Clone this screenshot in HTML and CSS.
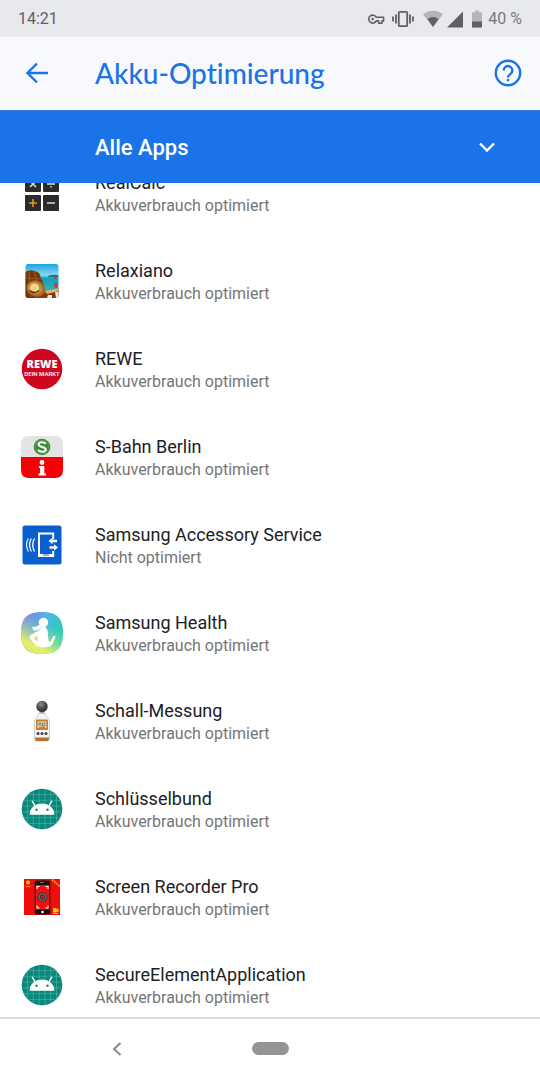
FILE: index.html
```
<!DOCTYPE html>
<html lang="de">
<head>
  <meta charset="utf-8">
  <meta name="viewport" content="width=device-width, initial-scale=1">
  <title>Akku-Optimierung</title>
  <link rel="stylesheet" href="styles.css">
</head>
<body>
  <div class="screen">
    <div class="status-bar">
      <span class="clock">14:21</span>
      <div class="status-icons">
        <svg class="icon-key" width="18" height="18" viewBox="0 0 18 18" fill="none" stroke="#5f6062" stroke-width="1.6" stroke-linejoin="round">
          <path d="M9.3 7.3A4 4 0 1 0 9.3 10.9H11.6V13.2H15V10.9H16.6V7.3Z"/>
          <circle cx="5.6" cy="9.1" r="1.3" fill="#5f6062" stroke="none"/>
        </svg>
        <svg class="icon-vibrate" width="22" height="18" viewBox="0 0 22 18" fill="none" stroke="#5f6062" stroke-width="1.8">
          <rect x="6.8" y="1.8" width="8.4" height="14.4" rx="1"/>
          <path d="M4 4.5v9M1 6.500v5M18 4.500v9M21 6.500v5"/>
        </svg>
        <svg class="icon-wifi" width="20" height="18" viewBox="0 0 20 18">
          <path d="M0 4.200C6-.4 14-.4 20 4.200L10 17Z" fill="#b4b5b8"/>
          <path d="M4.500 9.200C7.800 6.400 12.200 6.400 15.500 9.200L10 17Z" fill="#5f6062"/>
        </svg>
        <svg class="icon-signal" width="16" height="18" viewBox="0 0 16 18">
          <path d="M16 1.500V17.500H0Z" fill="#5f6062"/>
        </svg>
        <svg class="icon-battery" width="10" height="18" viewBox="0 0 10 18">
          <path d="M3 .5h4v1.700h2.300q.7 0 .7.700V16.800q0 .7-.7.700H.7q-.7 0-.7-.7V2.900q0-.7.7-.7H3Z" fill="#b4b5b8"/>
          <path d="M0 11.500h10v5.300q0 .7-.7.700H.7q-.7 0-.7-.7Z" fill="#5f6062"/>
        </svg>
        <span class="battery-level">40 %</span>
      </div>
    </div>

    <header class="app-bar">
      <button type="button" class="icon-button" aria-label="Zurück">
        <svg width="26" height="26" viewBox="0 0 26 26" fill="none" stroke="#1a73e8" stroke-width="2.400">
          <path d="M24 13H3.500M13 3.500L3.500 13L13 22.500"/>
        </svg>
      </button>
      <h1>Akku-Optimierung</h1>
      <button type="button" class="icon-button" aria-label="Hilfe">
        <svg width="28" height="28" viewBox="0 0 28 28" fill="none" stroke="#1a73e8" stroke-width="2.400">
          <circle cx="14" cy="14" r="12.200"/>
          <path d="M9.700 11.500a4.300 4.300 0 1 1 7.500 2.700c-1.500 1.600-3.200 2.100-3.200 4.300"/>
          <path d="M14 19.800v2.500"/>
        </svg>
      </button>
    </header>

    <div class="filter-bar">
      <select class="filter" aria-label="Apps filtern">
        <option>Alle Apps</option>
        <option>Nicht optimiert</option>
      </select>
      <svg class="filter-arrow" width="18" height="18" viewBox="0 0 18 18" fill="none" stroke="#fff" stroke-width="2.400">
        <path d="M2 5.500L9 12.500L16 5.500"/>
      </svg>
    </div>

    <main class="list">
      <ul class="apps">
        <li class="app">
          <svg class="app-icon" viewBox="0 0 42 42">
            <g fill="#2b2b2b">
              <rect x="4" y="4" width="16" height="16" rx="1"/>
              <rect x="22" y="4" width="16" height="16" rx="1"/>
              <rect x="4" y="23" width="16" height="16" rx="1"/>
              <rect x="22" y="23" width="16" height="16" rx="1"/>
            </g>
            <path d="M9 9l6 6M15 9l-6 6M26 12h8M30 8.500v1.500M30 14v1.500M26 31h8" stroke="#ddd" stroke-width="1.500"/>
            <path d="M8 31h8M12 27v8" stroke="#f09a1c" stroke-width="1.500"/>
          </svg>
          <div class="app-text">
            <span class="app-name">RealCalc</span>
            <span class="app-state">Akkuverbrauch optimiert</span>
          </div>
        </li>
        <li class="app">
          <svg class="app-icon" viewBox="0 0 42 42">
            <defs>
              <linearGradient id="sky" x2="0" y2="1">
                <stop offset="0" stop-color="#1aa5e0"/>
                <stop offset=".33" stop-color="#8ed8ea"/>
                <stop offset=".42" stop-color="#0f9fc4"/>
                <stop offset="1" stop-color="#39bcc9"/>
              </linearGradient>
              <clipPath id="beach"><rect x="4.500" y="4" width="33" height="34" rx="2.500"/></clipPath>
            </defs>
            <g clip-path="url(#beach)">
              <rect x="4" y="4" width="34" height="34" fill="url(#sky)"/>
              <path d="M27 16q5-2 11-.5v1.500H27Z" fill="#1b7584"/>
              <path d="M4 12q7-4 14 1l5 12v13H4Z" fill="#74380f"/>
              <path d="M8 12l2 25M13 11l5 18M4 18l16 1" stroke="#a35a20" stroke-width="1"/>
              <path d="M17 33l21-5v10H12Z" fill="#803a12"/>
              <path d="M24 31l14-3v3l-12 3Z" fill="#e3b36c"/>
              <path d="M27 35h4v3h-5ZM34 32h4v6h-3Z" fill="#f1ead8"/>
              <ellipse cx="15" cy="28.500" rx="9.500" ry="8" fill="#aa6a27" transform="rotate(20 15 28.500)"/>
              <ellipse cx="14" cy="28" rx="7.500" ry="6" fill="#c48a40" transform="rotate(20 14 28)"/>
              <ellipse cx="13.500" cy="28" rx="4.700" ry="4.500" fill="#f0d68b"/>
              <path d="M9 30.500q4 4 9 0" fill="none" stroke="#54270d" stroke-width="1.200"/>
              <path d="M24 24l4 4M30 22l-3 5" stroke="#51ad68" stroke-width="1"/>
              <rect x="33" y="16" width="2.500" height="3" fill="#6d5b65"/>
              <path d="M33 23h4l-1 5h-2Z" fill="#e3332c"/>
            </g>
          </svg>
          <div class="app-text">
            <span class="app-name">Relaxiano</span>
            <span class="app-state">Akkuverbrauch optimiert</span>
          </div>
        </li>
        <li class="app">
          <svg class="app-icon" viewBox="0 0 42 42">
            <circle cx="21" cy="21" r="20.300" fill="#cc071e"/>
            <text class="rewe-top" x="21" y="20">REWE</text>
            <text class="rewe-sub" x="21" y="28">DEIN MARKT</text>
          </svg>
          <div class="app-text">
            <span class="app-name">REWE</span>
            <span class="app-state">Akkuverbrauch optimiert</span>
          </div>
        </li>
        <li class="app">
          <svg class="app-icon" viewBox="0 0 42 42">
            <path d="M0 21V8q0-8 8-8h26q8 0 8 8v13Z" fill="#e4e4e4"/>
            <path d="M0 21h42v13q0 8-8 8H8q-8 0-8-8Z" fill="#f50005"/>
            <circle cx="21" cy="11" r="8.300" fill="#3c8a35"/>
            <circle cx="21" cy="11" r="6.800" fill="none" stroke="#6aa965" stroke-width=".6"/>
            <path d="M24.800 7.800C23 5.900 17.600 5.600 17.600 8.600C17.600 11.600 24.800 10.300 24.800 13.400C24.800 16.300 19.200 16.300 17 14" fill="none" stroke="#fff" stroke-width="2"/>
            <circle cx="21" cy="26.500" r="2.400" fill="#fff"/>
            <path d="M18 30h5.300v7.600H25V39.500h-7.500v-1.900h1.600v-5.700H18Z" fill="#fff"/>
          </svg>
          <div class="app-text">
            <span class="app-name">S-Bahn Berlin</span>
            <span class="app-state">Akkuverbrauch optimiert</span>
          </div>
        </li>
        <li class="app">
          <svg class="app-icon" viewBox="0 0 42 42">
            <rect x="1.500" y="1.500" width="39" height="39" rx="2.500" fill="#0a5fcf"/>
            <g fill="none" stroke="#fff">
              <path d="M32.200 15V9.500H18V32H32.200V27" stroke-width="2"/>
              <path d="M17 31.500h16" stroke-width="3"/>
              <path d="M22 31h6" stroke="#0a5fcf" stroke-width="1"/>
              <path d="M13.500 14.500q-3.500 6.500 0 13" stroke-width="1.300"/>
              <path d="M10.300 14.500q-3.500 6.500 0 13" stroke-width="1.200"/>
              <path d="M7.300 14.500q-3.500 6.500 0 13" stroke-width="1.100"/>
            </g>
            <path d="M27.500 17l4-3.300v2.100H36v2.400h-4.500v2.100ZM37 23.500l-4-3.300v2.100h-4.500v2.400H33v2.100Z" fill="#fff"/>
          </svg>
          <div class="app-text">
            <span class="app-name">Samsung Accessory Service</span>
            <span class="app-state">Nicht optimiert</span>
          </div>
        </li>
        <li class="app">
          <svg class="app-icon" viewBox="0 0 42 42">
            <defs>
              <linearGradient id="health" x1="0" y1="0" x2="1" y2=".3">
                <stop offset=".1" stop-color="#8583e0"/>
                <stop offset=".6" stop-color="#4bb7e8"/>
                <stop offset="1" stop-color="#2ecdb4"/>
              </linearGradient>
              <linearGradient id="glow" x1=".7" y1=".3" x2=".35" y2="1">
                <stop offset="0" stop-color="#7ce0a0" stop-opacity="0"/>
                <stop offset=".8" stop-color="#e9ee66"/>
                <stop offset="1" stop-color="#d9ec72"/>
              </linearGradient>
            </defs>
            <path d="M21 0C36 0 42 6 42 21S36 42 21 42S0 36 0 21S6 0 21 0Z" fill="url(#health)"/>
            <path d="M21 0C36 0 42 6 42 21S36 42 21 42S0 36 0 21S6 0 21 0Z" fill="url(#glow)"/>
            <circle cx="22.500" cy="10.500" r="4.700" fill="#fff"/>
            <path d="M19 12.500q-3 2.500-8 2.500l1.500 3.500q6 .5 8-3.500Z" fill="#fff"/>
            <path d="M20.500 15h4l2 3l1 11l2 1L32 24.500q1.500-1.500 2.500.5L31.500 32q-2 3.500-9 3.500q-6.500 0-9.500-4L8.500 26q-.5-2 1.500-3.200l9-5Z" fill="#fff"/>
            <path d="M12.500 26l4-2.500l.3 4l-1 2Z" fill="#dfe08c"/>
          </svg>
          <div class="app-text">
            <span class="app-name">Samsung Health</span>
            <span class="app-state">Akkuverbrauch optimiert</span>
          </div>
        </li>
        <li class="app">
          <svg class="app-icon" viewBox="0 0 42 42">
            <defs>
              <radialGradient id="foam" cx=".4" cy=".3">
                <stop offset="0" stop-color="#8a8a8a"/>
                <stop offset="1" stop-color="#3c3c3c"/>
              </radialGradient>
            </defs>
            <rect x="18.500" y="11" width="5" height="4" fill="#aaa"/>
            <circle cx="21" cy="6.500" r="5.700" fill="url(#foam)"/>
            <path d="M18 13.500h6l4.500 7V39q0 2-2 2h-11q-2 0-2-2V20.500Z" fill="#f4f4f4" stroke="#bbb" stroke-width=".7"/>
            <rect x="15" y="19.500" width="12" height="10.500" rx="1" fill="#c8802e"/>
            <rect x="16.600" y="21.500" width="8.800" height="6.500" fill="#e8ddc4"/>
            <path d="M18 26v-3h2v3M21.500 26v-3h2.500v3ZM18 27.300h6" fill="none" stroke="#6a6458" stroke-width=".8"/>
            <g fill="#484040"><circle cx="17" cy="33.500" r="1.500"/><circle cx="21" cy="33.500" r="1.500"/><circle cx="25" cy="33.500" r="1.500"/></g>
            <path d="M13.700 37.500h14.800l-1.500 3.500H15Z" fill="#b8752b"/>
          </svg>
          <div class="app-text">
            <span class="app-name">Schall-Messung</span>
            <span class="app-state">Akkuverbrauch optimiert</span>
          </div>
        </li>
        <li class="app">
          <svg class="app-icon" viewBox="0 0 42 42">
            <defs>
              <clipPath id="disc"><circle cx="21" cy="21" r="20.300"/></clipPath>
              <g id="robot">
                <circle cx="21" cy="21" r="20.300" fill="#06897a"/>
                <path clip-path="url(#disc)" d="M6.500 0v42M12.300 0v42M18.100 0v42M23.900 0v42M29.700 0v42M35.500 0v42M0 6.500h42M0 12.300h42M0 18.100h42M0 23.900h42M0 29.700h42M0 35.500h42" stroke="#58b3a8" stroke-width=".6"/>
                <path d="M8.500 26.700a12.500 11.200 0 0 1 25 0Z" fill="#fff"/>
                <path d="M14 17.500l-3-4.700M28 17.500l3-4.700" stroke="#fff" stroke-width="1.300"/>
                <circle cx="15.500" cy="21.800" r="1.200" fill="#06897a"/>
                <circle cx="26.500" cy="21.800" r="1.200" fill="#06897a"/>
              </g>
            </defs>
            <use href="#robot"/>
          </svg>
          <div class="app-text">
            <span class="app-name">Schlüsselbund</span>
            <span class="app-state">Akkuverbrauch optimiert</span>
          </div>
        </li>
        <li class="app">
          <svg class="app-icon" viewBox="0 0 42 42">
            <rect x="3" y="3" width="36" height="36" fill="#f20d0d"/>
            <rect x="13.700" y="4.500" width="15.600" height="34" rx="2" fill="#16100f"/>
            <rect x="14.700" y="9" width="13.600" height="24.500" fill="#ef1212"/>
            <path d="M19 6.500h4" stroke="#999" stroke-width=".8"/>
            <path d="M16 13v-2.500h2.500M24.500 10.500H27V13M16 29.500V32h2.500M24.500 32H27v-2.500" fill="none" stroke="#fff" stroke-width="1.100"/>
            <circle cx="21.500" cy="21" r="4.700" fill="#303030"/>
            <circle cx="21.500" cy="21" r="3.400" fill="none" stroke="#96928f" stroke-width=".8"/>
            <circle cx="21.500" cy="21" r="1.800" fill="#d41b1b"/>
            <circle cx="21.500" cy="36" r="1.300" fill="#fff"/>
            <circle cx="7" cy="6.500" r="2" fill="#ffc60a"/>
            <path d="M4.500 10.500h5" stroke="#f08a12" stroke-width="1.300"/>
            <path d="M31 3.500l8 7" stroke="#efa016" stroke-width="2" stroke-dasharray="2 .8"/>
            <path d="M32 32h3.500v1.500l2-1v4l-2-1v1h-3.500ZM32 38h5v-1h-5Z" fill="#ffc60a"/>
          </svg>
          <div class="app-text">
            <span class="app-name">Screen Recorder Pro</span>
            <span class="app-state">Akkuverbrauch optimiert</span>
          </div>
        </li>
        <li class="app">
          <svg class="app-icon" viewBox="0 0 42 42"><use href="#robot"/></svg>
          <div class="app-text">
            <span class="app-name">SecureElementApplication</span>
            <span class="app-state">Akkuverbrauch optimiert</span>
          </div>
        </li>
      </ul>
    </main>

    <nav class="nav-bar">
      <button type="button" class="nav-back" aria-label="Zurück">
        <svg width="10" height="14" viewBox="0 0 10 14" fill="none" stroke="#8a8a8a" stroke-width="2">
          <path d="M8.500 1L2 7L8.500 13"/>
        </svg>
      </button>
      <button type="button" class="nav-home" aria-label="Startbildschirm"></button>
    </nav>
  </div>
</body>
</html>
```
FILE: styles.css
```
* {
  box-sizing: border-box;
}
body {
  margin: 0;
  font-family: Roboto, "Liberation Sans", sans-serif;
  background-color: #fff;
  color: #202124;
}
button {
  border: none;
  padding: 0;
  background: none;
  cursor: pointer;
}
svg {
  display: block;
  flex: none;
}
.screen {
  display: flex;
  flex-direction: column;
  height: 100vh;
}

/* status bar */
.status-bar {
  display: flex;
  flex: none;
  align-items: center;
  justify-content: space-between;
  height: 37px;
  padding: 0 18px;
  background-color: #e8e9ed;
  color: #5f6062;
  font-size: 16px;
}
.status-icons {
  display: flex;
  align-items: center;
}
.icon-vibrate {
  margin-left: 7px;
}
.icon-wifi,
.icon-battery {
  margin-left: 9px;
}
.icon-signal {
  margin-left: 4px;
}
.battery-level {
  margin-left: 6px;
  color: #77787b;
}

/* title */
.app-bar {
  display: flex;
  flex: none;
  align-items: center;
  height: 73px;
  padding: 0 18px 2px 24px;
  background-color: #f8f9fc;
}
.app-bar h1 {
  flex: 1;
  margin: 0 0 0 45px;
  font-family: "Lato Medium", Lato, Roboto, sans-serif;
  font-size: 28px;
  font-weight: 600;
  font-variant-ligatures: none;
  color: #1a73e8;
}

/* filter */
.filter-bar {
  position: relative;
  z-index: 1;
  flex: none;
  height: 73px;
  border-top: 1px solid #3f83d8;
  background-color: #1a73e8;
}
.filter {
  appearance: none;
  width: 100%;
  height: 100%;
  padding: 0 60px 0 95px;
  border: none;
  background: none;
  color: #fff;
  font-family: inherit;
  font-size: 22px;
  font-weight: 500;
}
.filter option {
  color: #202124;
}
.filter-arrow {
  position: absolute;
  top: 27px;
  right: 44px;
  pointer-events: none;
}

/* app list */
.list {
  flex: 1;
  min-height: 0;
  overflow: hidden;
}
.apps {
  margin: -34px 0 0;
  padding: 0;
  list-style: none;
}
.app {
  display: flex;
  align-items: center;
  gap: 32px;
  height: 88px;
  padding: 0 21px;
}
.app-icon {
  width: 42px;
  height: 42px;
}
.app-text {
  display: flex;
  flex-direction: column;
  gap: 1px;
  padding-top: 2px;
}
.app-name {
  font-size: 18px;
  line-height: 22px;
}
.app-state {
  font-size: 16px;
  line-height: 22px;
  color: #757575;
}
.rewe-top,
.rewe-sub {
  fill: #fff;
  text-anchor: middle;
}
.rewe-top {
  font-family: "Open Sans", sans-serif;
  font-size: 11px;
  font-weight: 800;
}
.rewe-sub {
  font-family: Roboto, sans-serif;
  font-size: 6px;
  font-weight: 500;
}

/* navigation */
.nav-bar {
  display: grid;
  flex: none;
  grid-template-columns: 1fr auto 1fr;
  align-items: center;
  height: 63px;
  padding-bottom: 2px;
  border-top: 2px solid #dedede;
}
.nav-back {
  justify-self: center;
  padding-right: 18px;
}
.nav-home {
  width: 37px;
  height: 13px;
  border-radius: 7px;
  background-color: #949494;
}
```
